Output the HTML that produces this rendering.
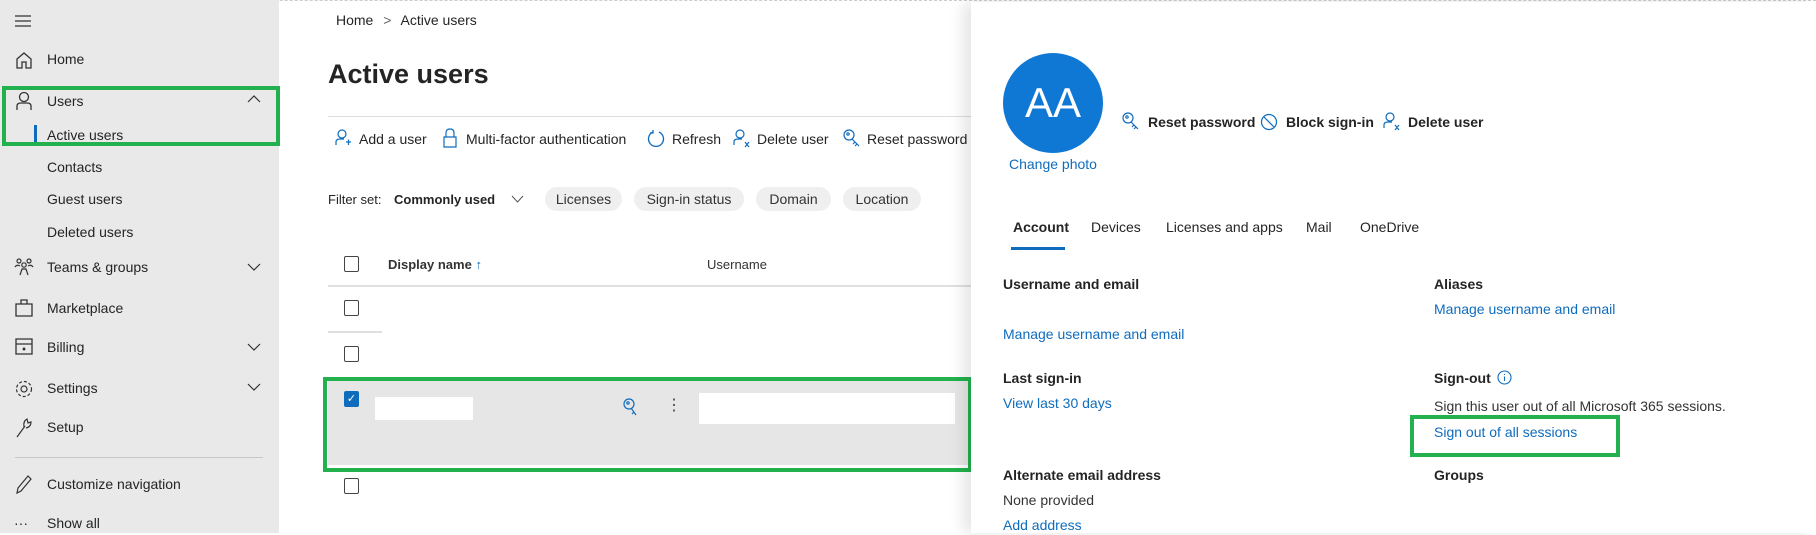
<!DOCTYPE html>
<html><head><meta charset="utf-8"><style>
*{margin:0;padding:0;box-sizing:border-box}
body{width:1816px;height:533px;overflow:hidden;background:#fff;font-family:"Liberation Sans",sans-serif;color:#242424;position:relative;font-size:15px}
.a{position:absolute;white-space:nowrap;line-height:20px}
.side{position:absolute;left:0;top:0;width:279px;height:533px;background:#e9e9e9}
.side2 .a{font-size:14px}
.blue{color:#0f6cbd}
.b{font-weight:bold}
.cb{position:absolute;width:15px;height:16px;border:1.5px solid #444;border-radius:2px;background:#fff}
.pill{position:absolute;top:187px;height:24px;border-radius:12px;background:#efefef;font-size:14px;line-height:24px;text-align:center;color:#333}
.green{position:absolute;border:4px solid #22b14c}
svg{position:absolute}
.tb{font-size:14px}
</style></head><body>
<div style="position:absolute;left:0;top:0;width:1816px;height:2px;border-top:1px dashed #ccc"></div>
<div class="side"></div>
<svg style="left:14px;top:14px" width="18" height="14"><path d="M1 2H17M1 7H17M1 12H17" stroke="#333" stroke-width="1.3"/></svg>
<svg style="left:15px;top:51px" width="18" height="18" fill="none" stroke="#333" stroke-width="1.3"><path d="M2 8L9 2L16 8V17H11V11H7V17H2Z"/></svg>
<svg style="left:15px;top:91px" width="18" height="20" fill="none" stroke="#333" stroke-width="1.3"><circle cx="9" cy="6" r="4.5"/><path d="M2 19V15Q2 12 6 12H12Q16 12 16 15V19"/></svg>
<svg style="left:14px;top:258px" width="20" height="18" fill="none" stroke="#333" stroke-width="1.2"><circle cx="5" cy="3" r="2"/><circle cx="15" cy="3" r="2"/><circle cx="10" cy="7" r="2.2"/><path d="M1 9Q3 6 6 8M19 9Q17 6 14 8M6 17L8 11H12L14 17"/></svg>
<svg style="left:15px;top:299px" width="18" height="18" fill="none" stroke="#333" stroke-width="1.3"><path d="M1 5H17V17H1ZM6 5V1H12V5"/></svg>
<svg style="left:15px;top:338px" width="18" height="17" fill="none" stroke="#333" stroke-width="1.3"><path d="M1 1H17V16H1ZM1 6H17"/><circle cx="9" cy="11" r="0.8" fill="#333"/></svg>
<svg style="left:14px;top:379px" width="20" height="20" fill="none" stroke="#333" stroke-width="1.2"><circle cx="10" cy="10" r="3"/><circle cx="10" cy="10" r="7.5" stroke-dasharray="3 2"/></svg>
<svg style="left:15px;top:418px" width="18" height="20" fill="none" stroke="#333" stroke-width="1.2"><path d="M2 19L10 8M9 9Q8 3 12 1L13 5L16 4Q16 9 11 10"/></svg>
<svg style="left:15px;top:474px" width="18" height="20" fill="none" stroke="#333" stroke-width="1.2"><path d="M2 19L3 14L13 2L16 5L6 17Z"/></svg>
<div class="side2">
<div class="a" style="left:14px;top:513px">···</div>
<div class="a" style="left:47px;top:49px">Home</div>
<div class="a" style="left:47px;top:91px">Users</div>
<div class="a" style="left:47px;top:125px">Active users</div>
<div class="a" style="left:47px;top:157px">Contacts</div>
<div class="a" style="left:47px;top:189px">Guest users</div>
<div class="a" style="left:47px;top:222px">Deleted users</div>
<div class="a" style="left:47px;top:257px">Teams &amp; groups</div>
<div class="a" style="left:47px;top:298px">Marketplace</div>
<div class="a" style="left:47px;top:337px">Billing</div>
<div class="a" style="left:47px;top:378px">Settings</div>
<div class="a" style="left:47px;top:417px">Setup</div>
<div class="a" style="left:47px;top:474px">Customize navigation</div>
<div class="a" style="left:47px;top:513px">Show all</div>
</div>
<svg style="left:247px;top:94px" width="14" height="10"><path d="M1 8L7 2L13 8" fill="none" stroke="#333" stroke-width="1.2"/></svg>
<div style="position:absolute;left:34px;top:125px;width:3px;height:20px;background:#0f6cbd"></div>
<svg style="left:247px;top:262px" width="14" height="10"><path d="M1 2L7 8L13 2" fill="none" stroke="#333" stroke-width="1.2"/></svg>
<svg style="left:247px;top:342px" width="14" height="10"><path d="M1 2L7 8L13 2" fill="none" stroke="#333" stroke-width="1.2"/></svg>
<svg style="left:247px;top:382px" width="14" height="10"><path d="M1 2L7 8L13 2" fill="none" stroke="#333" stroke-width="1.2"/></svg>
<div style="position:absolute;left:15px;top:457px;width:248px;height:1px;background:#c8c8c8"></div>
<div class="green" style="left:2px;top:86px;width:278px;height:60px"></div>

<div class="a" style="left:336px;top:10px;font-size:14px">Home <span style="color:#666;margin:0 6px">&gt;</span> Active users</div>
<div class="a b" style="left:328px;top:57px;font-size:27px;line-height:34px">Active users</div>
<div style="position:absolute;left:328px;top:116px;width:645px;height:1px;background:#ddd"></div>
<svg style="left:335px;top:129px" width="16" height="20" fill="none" stroke="#0f6cbd" stroke-width="1.2"><circle cx="7" cy="5" r="4"/><path d="M1 16V13Q1 10 5 10H9M11 13H16M13.5 10.5V16"/></svg>
<div class="a tb" style="left:359px;top:129px">Add a user</div>
<svg style="left:443px;top:128px" width="14" height="20" fill="none" stroke="#0f6cbd" stroke-width="1.2"><path d="M3 9V5Q3 1 7 1Q11 1 11 5V9M1 9H13V19H1Z"/></svg>
<div class="a tb" style="left:466px;top:129px">Multi-factor authentication</div>
<svg style="left:647px;top:129px" width="18" height="20" fill="none" stroke="#0f6cbd" stroke-width="1.3"><path d="M6 3A7.5 7.5 0 1 0 12 3M6 1V4H3"/></svg>
<div class="a tb" style="left:672px;top:129px">Refresh</div>
<svg style="left:733px;top:129px" width="18" height="20" fill="none" stroke="#0f6cbd" stroke-width="1.2"><circle cx="7" cy="5" r="4"/><path d="M1 16V13Q1 10 5 10H9M12 13L16 18M16 13L12 18"/></svg>
<div class="a tb" style="left:757px;top:129px">Delete user</div>
<svg style="left:843px;top:129px" width="18" height="20" fill="none" stroke="#0f6cbd" stroke-width="1.2"><circle cx="6" cy="6" r="5"/><circle cx="5" cy="5" r="1.2"/><path d="M9 10L16 17M12 13L10 15M14 15L12 17"/></svg>
<div class="a tb" style="left:867px;top:129px">Reset password</div>

<div class="a" style="left:328px;top:190px;font-size:13px">Filter set:</div>
<div class="a b" style="left:394px;top:190px;font-size:13px">Commonly used</div>
<svg style="left:511px;top:195px" width="13" height="9"><path d="M1 1L6.5 7L12 1" fill="none" stroke="#555" stroke-width="1"/></svg>
<div class="pill" style="left:545px;width:77px">Licenses</div>
<div class="pill" style="left:634px;width:110px">Sign-in status</div>
<div class="pill" style="left:756px;width:75px">Domain</div>
<div class="pill" style="left:843px;width:78px">Location</div>

<div class="cb" style="left:344px;top:256px"></div>
<div class="a" style="left:388px;top:255px;font-size:13px;font-weight:bold;color:#333">Display name <span style="color:#0f6cbd;font-weight:normal">↑</span></div>
<div class="a" style="left:707px;top:255px;font-size:13px;color:#333">Username</div>
<div style="position:absolute;left:328px;top:285px;width:645px;height:2px;background:#e0e0e0"></div>
<div class="cb" style="left:344px;top:300px"></div>
<div style="position:absolute;left:328px;top:331px;width:54px;height:2px;background:#e0e0e0"></div>
<div class="cb" style="left:344px;top:346px"></div>
<div style="position:absolute;left:328px;top:381px;width:644px;height:84px;background:#e6e6e6"></div>
<div style="position:absolute;left:344px;top:391px;width:15px;height:16px;background:#0f6cbd;border-radius:2px;color:#fff;font-size:11px;text-align:center;line-height:16px">✓</div>
<div style="position:absolute;left:375px;top:397px;width:98px;height:23px;background:#fff"></div>
<svg style="left:623px;top:398px" width="16" height="20" fill="none" stroke="#0f6cbd" stroke-width="1.2"><circle cx="6" cy="6" r="5"/><circle cx="5" cy="5" r="1.2"/><path d="M8 10L13 17M11 14L9 16"/></svg>
<div class="a" style="left:666px;top:396px;font-size:16px;line-height:20px;color:#444">⋮</div>
<div style="position:absolute;left:699px;top:393px;width:256px;height:31px;background:#fff"></div>
<div class="green" style="left:323px;top:377px;width:649px;height:95px"></div>
<div class="cb" style="left:344px;top:478px"></div>

<div style="position:absolute;left:971px;top:2px;width:845px;height:531px;background:#fff;box-shadow:-8px 0 14px rgba(0,0,0,0.10)"></div>
<div style="position:absolute;left:1003px;top:53px;width:100px;height:100px;border-radius:50%;background:#0f78d4;color:#fff;font-size:42px;text-align:center;line-height:100px">AA</div>
<div class="a blue" style="left:1009px;top:154px;font-size:14px">Change photo</div>
<svg style="left:1122px;top:112px" width="18" height="20" fill="none" stroke="#0f6cbd" stroke-width="1.2"><circle cx="6" cy="6" r="5"/><circle cx="5" cy="5" r="1.2"/><path d="M9 10L16 17M12 13L10 15M14 15L12 17"/></svg>
<div class="a b" style="left:1148px;top:112px;font-size:14px">Reset password</div>
<svg style="left:1260px;top:113px" width="18" height="18" fill="none" stroke="#0f6cbd" stroke-width="1.2"><circle cx="9" cy="9" r="7.5"/><path d="M4 4L14 14"/></svg>
<div class="a b" style="left:1286px;top:112px;font-size:14px">Block sign-in</div>
<svg style="left:1383px;top:112px" width="18" height="20" fill="none" stroke="#0f6cbd" stroke-width="1.2"><circle cx="7" cy="5" r="4"/><path d="M1 16V13Q1 10 5 10H9M12 13L16 18M16 13L12 18"/></svg>
<div class="a b" style="left:1408px;top:112px;font-size:14px">Delete user</div>

<div class="a" style="left:1013px;top:217px;font-size:14px;font-weight:bold">Account</div>
<div class="a" style="left:1091px;top:217px;font-size:14px">Devices</div>
<div class="a" style="left:1166px;top:217px;font-size:14px">Licenses and apps</div>
<div class="a" style="left:1306px;top:217px;font-size:14px">Mail</div>
<div class="a" style="left:1360px;top:217px;font-size:14px">OneDrive</div>
<div style="position:absolute;left:1011px;top:247px;width:54px;height:3px;background:#0f6cbd"></div>

<div class="a b" style="left:1003px;top:274px;font-size:14px">Username and email</div>
<div class="a b" style="left:1434px;top:274px;font-size:14px">Aliases</div>
<div class="a blue" style="left:1434px;top:299px;font-size:14px">Manage username and email</div>
<div class="a blue" style="left:1003px;top:324px;font-size:14px">Manage username and email</div>
<div class="a b" style="left:1003px;top:368px;font-size:14px">Last sign-in</div>
<div class="a b" style="left:1434px;top:368px;font-size:14px">Sign-out</div>
<svg style="left:1497px;top:370px" width="15" height="15" fill="none" stroke="#0f6cbd" stroke-width="1.1"><circle cx="7.5" cy="7.5" r="6.5"/><path d="M7.5 6.5V11M7.5 4V5"/></svg>
<div class="a blue" style="left:1003px;top:393px;font-size:14px">View last 30 days</div>
<div class="a" style="left:1434px;top:396px;font-size:14px;color:#333">Sign this user out of all Microsoft 365 sessions.</div>
<div class="a blue" style="left:1434px;top:422px;font-size:14px">Sign out of all sessions</div>
<div class="green" style="left:1410px;top:415px;width:210px;height:42px"></div>
<div class="a b" style="left:1003px;top:465px;font-size:14px">Alternate email address</div>
<div class="a b" style="left:1434px;top:465px;font-size:14px">Groups</div>
<div class="a" style="left:1003px;top:490px;font-size:14px;color:#333">None provided</div>
<div class="a blue" style="left:1003px;top:515px;font-size:14px">Add address</div>
</body></html>
